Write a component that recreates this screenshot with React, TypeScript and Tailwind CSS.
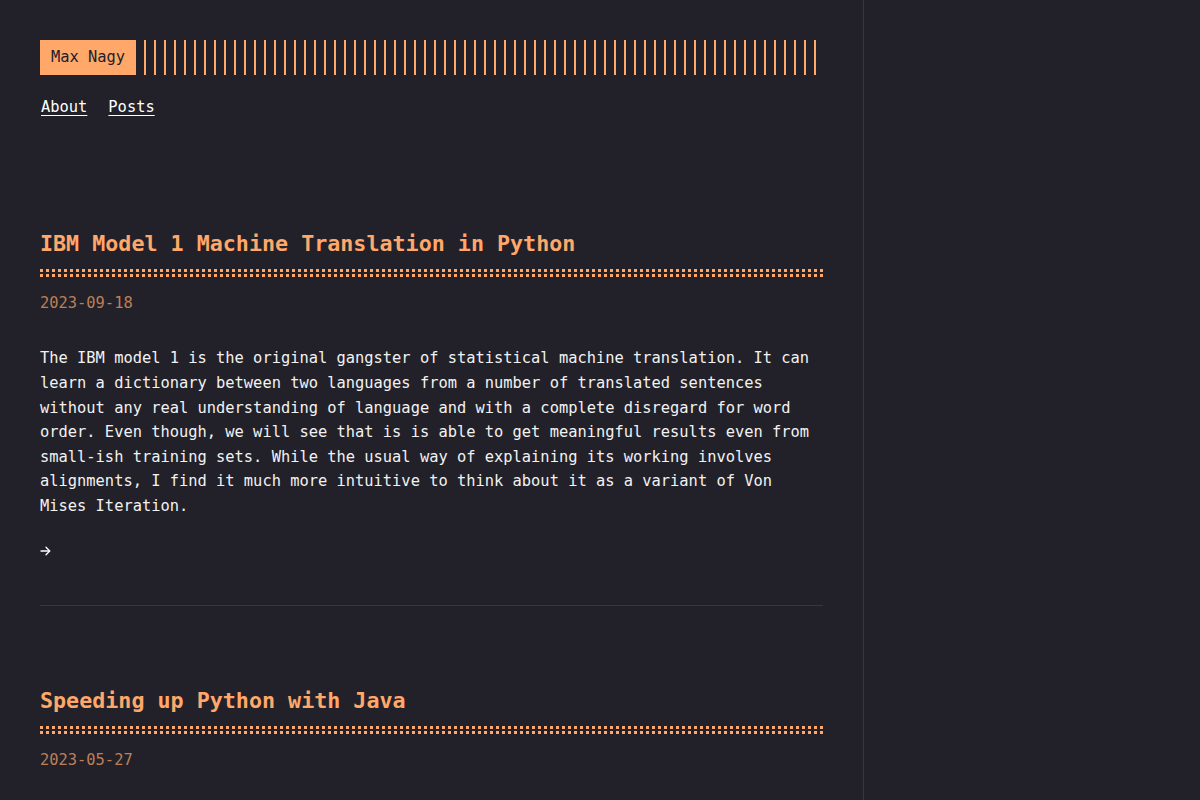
import React from "react";

const mono = "font-['DejaVu_Sans_Mono','Liberation_Mono',monospace]";

function PostTitle({ children }: { children: React.ReactNode }) {
  return (
    <div className="relative pb-[16px]">
      <h1 className="text-[21.7px] leading-[28px] font-bold text-[#ffa86a]">{children}</h1>
      {/* double dotted rule under the title */}
      <div className="absolute left-0 right-0 bottom-[2px] h-[3px] bg-[repeating-linear-gradient(90deg,#ffa86a_0_3px,transparent_3px_6px)]" />
      <div className="absolute left-0 right-0 bottom-[-3px] h-[3px] bg-[repeating-linear-gradient(90deg,#ffa86a_0_3px,transparent_3px_6px)]" />
    </div>
  );
}

function ReadMoreArrow() {
  return (
    <svg width="11" height="10" viewBox="0 0 11 10" fill="none" stroke="#ffffff" strokeWidth="1.3" strokeLinecap="round" strokeLinejoin="round">
      <path d="M1 5h8.6" />
      <path d="M6 1.3 9.7 5 6 8.7" />
    </svg>
  );
}

export default function App() {
  return (
    <div className={`min-h-[800px] w-full bg-[#222129] text-[#f2f2f2] ${mono} text-[15.4px] leading-[24.64px]`}>
      <div className="w-[864px] min-h-[800px] border-r border-[#38373f] px-10 pt-10">
        <header>
          <div className="flex items-stretch">
            <div className="bg-[#ffa86a] text-[#222129] px-[11px] py-[5px] leading-[25px]">Max Nagy</div>
            <div className="flex-1 ml-2 bg-[repeating-linear-gradient(90deg,#ffa86a_0_2px,transparent_2px_10px)]" />
          </div>
          <nav className="mt-[20px] flex gap-[21px] pl-px">
            <a className="underline underline-offset-[3px] text-white" href="#">About</a>
            <a className="underline underline-offset-[3px] text-white" href="#">Posts</a>
          </nav>
        </header>

        <article className="mt-[110px] border-b border-[#38373f] pb-[42px]">
          <PostTitle>IBM Model 1 Machine Translation in Python</PostTitle>
          <div className="mt-[17px] text-[#bd7f57]">2023-09-18</div>
          <p className="mt-[31px]">
            The IBM model 1 is the original gangster of statistical machine translation. It can
            <br />
            learn a dictionary between two languages from a number of translated sentences
            <br />
            without any real understanding of language and with a complete disregard for word
            <br />
            order. Even though, we will see that is is able to get meaningful results even from
            <br />
            small-ish training sets. While the usual way of explaining its working involves
            <br />
            alignments, I find it much more intuitive to think about it as a variant of Von
            <br />
            Mises Iteration.
          </p>
          <div className="mt-[20px] h-[24.64px] flex items-center">
            <a href="#" aria-label="Read more" className="block">
              <ReadMoreArrow />
            </a>
          </div>
        </article>

        <article className="mt-[81px]">
          <PostTitle>Speeding up Python with Java</PostTitle>
          <div className="mt-[17px] text-[#bd7f57]">2023-05-27</div>
        </article>
      </div>
    </div>
  );
}
